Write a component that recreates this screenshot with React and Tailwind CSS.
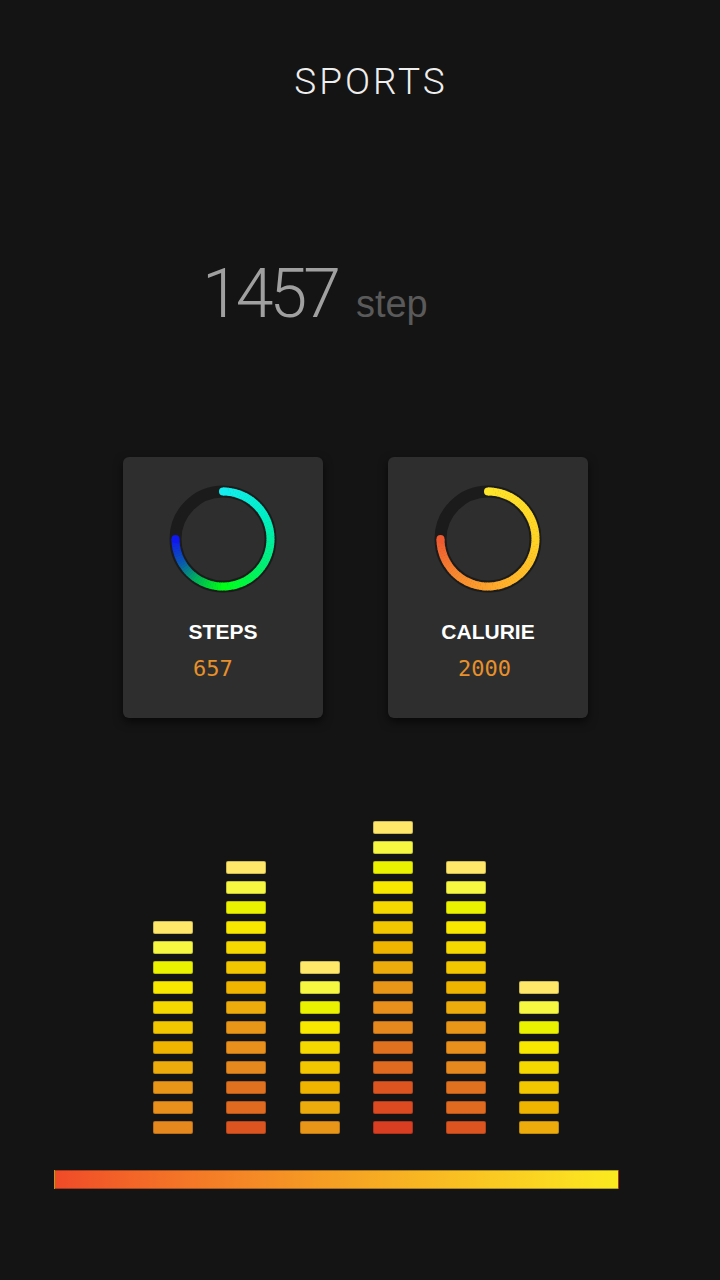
import React from "react";

const SEG_COLORS = [
  "#ffe869", "#f6f741", "#ebf200", "#f8e800", "#f5d800", "#f2c700",
  "#eeb400", "#edac0b", "#e89618", "#e8901b", "#e5881d", "#e0711f",
  "#e06a20", "#dc5521", "#dc4a22", "#d93d22",
];

const COLUMNS = [11, 14, 9, 16, 14, 8];

const hexToRgb = (h) => [1, 3, 5].map((i) => parseInt(h.slice(i, i + 2), 16));

function colorAt(stops, a) {
  for (let i = 0; i < stops.length - 1; i++) {
    const [a1, c1] = stops[i];
    const [a2, c2] = stops[i + 1];
    if (a >= a1 && a <= a2) {
      const t = (a - a1) / (a2 - a1);
      const x = hexToRgb(c1);
      const y = hexToRgb(c2);
      const m = x.map((v, k) => Math.round(v + (y[k] - v) * t));
      return `rgb(${m[0]},${m[1]},${m[2]})`;
    }
  }
  return stops[stops.length - 1][1];
}

const polar = (a, r = 47.5) => [
  54 + r * Math.sin((a * Math.PI) / 180),
  54 - r * Math.cos((a * Math.PI) / 180),
];

function Ring({ stops }) {
  const segs = [];
  const step = 3;
  for (let a = 0; a < 270; a += step) {
    const [x1, y1] = polar(a);
    const [x2, y2] = polar(Math.min(a + step + 0.6, 270));
    segs.push(
      <path
        key={a}
        d={`M ${x1} ${y1} A 47.5 47.5 0 0 1 ${x2} ${y2}`}
        stroke={colorAt(stops, a + step / 2)}
        strokeWidth="8"
        fill="none"
      />
    );
  }
  const [sx, sy] = polar(0);
  const [ex, ey] = polar(270);
  return (
    <svg width="108" height="108" viewBox="0 0 108 108">
      <circle cx="54" cy="54" r="47.5" stroke="#1b1b1b" strokeWidth="12" fill="none" />
      {segs}
      <circle cx={sx} cy={sy} r="4" fill={stops[0][1]} />
      <circle cx={ex} cy={ey} r="4" fill={stops[stops.length - 1][1]} />
    </svg>
  );
}

function Card({ title, value, stops }) {
  return (
    <div className="w-[200px] h-[261px] rounded-md bg-[#2e2e2e] shadow-[0_4px_10px_rgba(0,0,0,0.6)] flex flex-col items-center pt-[28px]">
      <Ring stops={stops} />
      <div className="mt-[27px] text-[21px] leading-[24px] font-bold text-white font-['Liberation_Sans',sans-serif]">
        {title}
      </div>
      <div className="mt-[12px] self-start pl-[70px] text-[22px] leading-[26px] text-[#e8902a] font-['DejaVu_Sans_Mono',monospace]">
        {value}
      </div>
    </div>
  );
}

export default function App() {
  return (
    <div className="w-[720px] h-[1280px] bg-[#141414] flex flex-col overflow-hidden">
      <div className="mt-[60px] text-center text-[37px] leading-[44px] tracking-[3px] font-light text-[#eeeeee] font-['Roboto',sans-serif] pl-[22px]">
        SPORTS
      </div>

      <div className="mt-[156px] flex items-baseline pl-[202px] h-[67px]">
        <span className="text-[68px] leading-none font-light tracking-[-4px] text-[#a0a0a0] font-['Roboto',sans-serif]">
          1457
        </span>
        <span className="ml-[19px] text-[38px] leading-none text-[#5a5a5a] font-['Liberation_Sans',sans-serif]">
          step
        </span>
      </div>

      <div className="mt-[130px] flex gap-[65px] pl-[123px]">
        <Card
          title="STEPS"
          value="657"
          stops={[
            [0, "#14eef0"],
            [60, "#00f0c8"],
            [120, "#00f078"],
            [180, "#00ff14"],
            [215, "#00b060"],
            [240, "#0a5ab0"],
            [270, "#1018f0"],
          ]}
        />
        <Card
          title="CALURIE"
          value="2000"
          stops={[
            [0, "#ffe62a"],
            [90, "#ffd225"],
            [160, "#ffb02a"],
            [220, "#f88a30"],
            [270, "#f05a30"],
          ]}
        />
      </div>

      <div className="mt-[103px] h-[313px] flex items-end gap-[33.3px] pl-[153px]">
        {COLUMNS.map((n, ci) => (
          <div key={ci} className="flex flex-col gap-[7px] w-[40px]">
            {SEG_COLORS.slice(0, n).map((c, i) => (
              <div
                key={i}
                className="h-[13px] rounded-[2px] border border-black/20"
                style={{ backgroundColor: c }}
              />
            ))}
          </div>
        ))}
      </div>

      <div className="mt-[36px] ml-[54px] w-[565px] h-[19px] border border-black/30 bg-gradient-to-r from-[#f04a28] via-[#f5a023] to-[#fbea20]" />
    </div>
  );
}
